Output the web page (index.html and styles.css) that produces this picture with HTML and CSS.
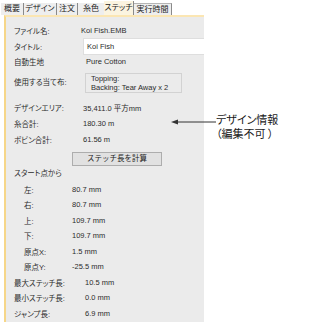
FILE: index.html
```html
<!DOCTYPE html>
<html>
  <head>
    <title>ステッチ情報</title>
    <link rel="stylesheet" href="styles.css">
  </head>
  <body>
    <div class="page">
      <div class="panel">
        <!-- Tab strip -->
        <div class="tabs">
          <span class="tab t-summary">概要</span>
          <span class="tab t-design">デザイン</span>
          <span class="tab t-order">注文</span>
          <span class="tab t-colour">糸色</span>
          <span class="tab t-stitch active">ステッチ</span>
          <span class="tab t-time last">実行時間</span>
        </div>

        <div class="sheet">
          <!-- File info -->
          <div class="grid top">
            <span class="lbl">ファイル名:</span>
            <span class="val">Koi Fish.EMB</span>
            <span class="lbl">タイトル:</span>
            <span class="val"><span class="field">Koi Fish</span></span>
            <span class="lbl">自動生地</span>
            <span class="val shift">Pure Cotton</span>
            <span class="lbl">使用する当て布:</span>
            <span class="val"><span class="box">Topping:<br>Backing: Tear Away x 2</span></span>
          </div>

          <!-- Design totals -->
          <div class="grid totals">
            <span class="lbl">デザインエリア:</span>
            <span class="val">35,411.0 平方mm</span>
            <span class="lbl">糸合計:</span>
            <span class="val">180.30 m</span>
            <span class="lbl">ボビン合計:</span>
            <span class="val">61.56 m</span>
          </div>

          <button type="button" class="calc">ステッチ長を計算</button>

          <!-- From start point -->
          <div class="heading">スタート点から</div>
          <div class="grid start">
            <span class="lbl">左:</span>
            <span class="val">80.7 mm</span>
            <span class="lbl">右:</span>
            <span class="val">80.7 mm</span>
            <span class="lbl">上:</span>
            <span class="val">109.7 mm</span>
            <span class="lbl">下:</span>
            <span class="val">109.7 mm</span>
            <span class="lbl">原点X:</span>
            <span class="val">1.5 mm</span>
            <span class="lbl">原点Y:</span>
            <span class="val">-25.5 mm</span>
          </div>

          <!-- Stitch lengths -->
          <div class="grid lengths">
            <span class="lbl">最大ステッチ長:</span>
            <span class="val">10.5 mm</span>
            <span class="lbl">最小ステッチ長:</span>
            <span class="val">0.0 mm</span>
            <span class="lbl">ジャンプ長:</span>
            <span class="val">6.9 mm</span>
          </div>
        </div>
      </div>

      <!-- Callout -->
      <div class="note">
        <svg class="arrow" width="46" height="8" viewBox="0 0 46 8">
          <line x1="4" y1="4" x2="45" y2="4" stroke="#333" stroke-width="1"/>
          <polygon points="0,4 7,1.5 7,6.5" fill="#333"/>
        </svg>
        <div class="note-text">デザイン情報<br>（編集不可 ）</div>
      </div>
    </div>
  </body>
</html>
```

FILE: styles.css
```css
/* Global styles */
body {
  margin: 0;
  padding: 0;
  background-color: #ffffff;
  font-family: "Liberation Sans", "Noto Sans CJK JP", sans-serif;
  font-feature-settings: "palt";
}

.page {
  position: relative;
  width: 328px;
  height: 335px;
  padding-left: 4px;
  box-sizing: border-box;
}

.panel {
  width: 200px;
}

/* Tab strip */
.tabs {
  display: flex;
  align-items: flex-end;
  height: 15px;
  margin-left: -3px;
  font-size: 8px;
  color: #222;
}

.tab {
  box-sizing: border-box;
  height: 12px;
  line-height: 12px;
  text-align: center;
  white-space: nowrap;
  border-right: 1px solid #8a8a8a;
  background-color: #eeeeee;
}

.t-summary { width: 23px; }
.t-design { width: 33px; }
.t-order { width: 21px; }
.t-colour { width: 26px; border-right: none; }
.t-stitch { width: 30px; }
.t-time { width: 38px; }

.tab.active {
  height: 14px;
  line-height: 14px;
  background-color: #fbf4e0;
}

.tab.last {
  border-top: 1px solid #b5b5b5;
  height: 12px;
  line-height: 11px;
}

/* Sheet */
.sheet {
  background-color: #ebebeb;
  border-top: 2px solid #fbe6b3;
  border-left: 2px solid #f6d688;
  padding: 6px 0 1px 8px;
  font-size: 7.5px;
  color: #2b2b2b;
}

.grid {
  display: grid;
  grid-auto-rows: 15.5px;
  align-items: center;
}

.grid.top {
  grid-template-columns: 67px 1fr;
  grid-template-rows: 15.5px 15.5px 15.5px 23px;
}

.grid.top .lbl:nth-of-type(4) {
  align-self: start;
  line-height: 16px;
}

.field {
  display: block;
  height: 15px;
  line-height: 15px;
  margin-left: 2px;
  padding-left: 3px;
  background-color: #ffffff;
  border: 1px solid #dedede;
  border-right: none;
}

.shift {
  padding-left: 5px;
}

.box {
  display: block;
  width: 90px;
  height: 18px;
  margin: 3px 0 0 4px;
  padding-left: 5px;
  line-height: 9px;
  border: 1px solid #d2d2d2;
}

.grid.top .val:last-child {
  align-self: start;
}

.grid.totals {
  grid-template-columns: 69px 1fr;
  grid-auto-rows: 16px;
  margin-top: 7px;
}

.calc {
  display: block;
  width: 90px;
  height: 14px;
  margin: 4px 0 0 58px;
  padding: 0;
  background-color: #e1e1e1;
  border: 1px solid #adadad;
  font-family: inherit;
  font-size: 7.5px;
  color: #222;
  line-height: 12px;
}

.heading {
  height: 15.5px;
  line-height: 15.5px;
  margin-top: 0.5px;
}

.grid.start {
  grid-template-columns: 48px 1fr;
  padding-left: 10px;
}

.grid.lengths {
  grid-template-columns: 71px 1fr;
}

/* Callout */
.note {
  position: absolute;
  left: 171px;
  top: 113px;
  display: flex;
  align-items: flex-start;
}

.arrow {
  margin-top: 5px;
}

.note-text {
  margin-left: -1px;
  font-family: "Noto Sans CJK JP", sans-serif;
  font-size: 11px;
  line-height: 13.5px;
  color: #1a1a1a;
}
```
